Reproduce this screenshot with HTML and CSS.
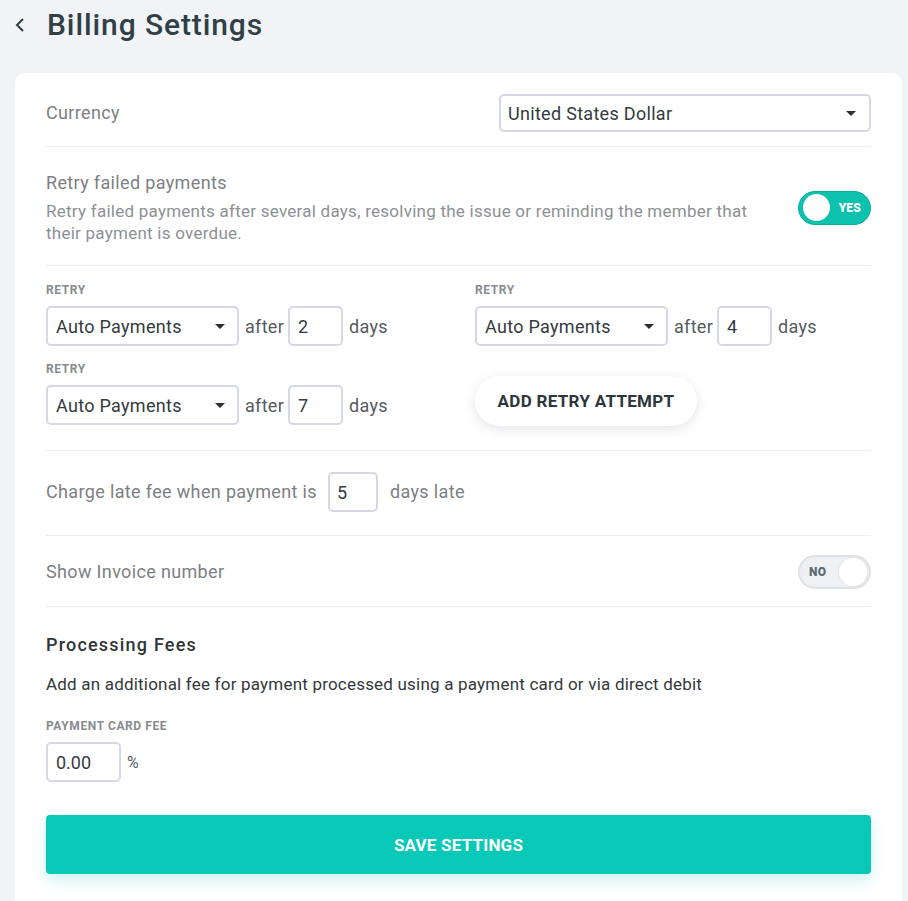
FILE: index.html
```html
<!DOCTYPE html>
<html>
<head>
<meta charset="utf-8">
<link rel="stylesheet" href="styles.css">
</head>
<body>
<header class="page-header">
  <svg class="back" width="12" height="16" viewBox="0 0 12 16"><path d="M9 2 L3 8 L9 14" fill="none" stroke="#2f4047" stroke-width="2"/></svg>
  <h1 class="title">Billing Settings</h1>
</header>
<main class="card">
  <section class="section row-between currency">
    <div class="label">Currency</div>
    <div class="select wide"><span>United States Dollar</span><i class="caret"></i></div>
  </section>

  <section class="section row-between retry-head">
    <div class="text-block">
      <div class="label">Retry failed payments</div>
      <div class="desc">Retry failed payments after several days, resolving the issue or reminding the member that their payment is overdue.</div>
    </div>
    <div class="toggle on"><span class="knob"></span><span class="toggle-text">YES</span></div>
  </section>

  <section class="section retries">
    <div class="retry">
      <div class="caps">RETRY</div>
      <div class="retry-line">
        <div class="select small"><span>Auto Payments</span><i class="caret"></i></div>
        <span class="word">after</span>
        <div class="input num">2</div>
        <span class="word">days</span>
      </div>
    </div>
    <div class="retry">
      <div class="caps">RETRY</div>
      <div class="retry-line">
        <div class="select small"><span>Auto Payments</span><i class="caret"></i></div>
        <span class="word">after</span>
        <div class="input num">4</div>
        <span class="word">days</span>
      </div>
    </div>
    <div class="retry">
      <div class="caps">RETRY</div>
      <div class="retry-line">
        <div class="select small"><span>Auto Payments</span><i class="caret"></i></div>
        <span class="word">after</span>
        <div class="input num">7</div>
        <span class="word">days</span>
      </div>
    </div>
    <div class="retry add-cell">
      <button class="add-btn">ADD RETRY ATTEMPT</button>
    </div>
  </section>

  <section class="section late">
    <span class="label">Charge late fee when payment is</span>
    <div class="input late-num">5</div>
    <span class="label">days late</span>
  </section>

  <section class="section row-between invoice">
    <div class="label">Show Invoice number</div>
    <div class="toggle off"><span class="toggle-text">NO</span><span class="knob"></span></div>
  </section>

  <section class="fees">
    <h2 class="fees-title">Processing Fees</h2>
    <p class="fees-desc">Add an additional fee for payment processed using a payment card or via direct debit</p>
    <div class="caps fee-label">PAYMENT CARD FEE</div>
    <div class="fee-line">
      <div class="input fee">0.00</div>
      <span class="pct">%</span>
    </div>
    <button class="save">SAVE SETTINGS</button>
  </section>
</main>
</body>
</html>
```

FILE: styles.css
```css
* { box-sizing: border-box; }
html, body { margin: 0; padding: 0; }
body {
  background: #f1f3f7;
  font-family: Roboto, "Liberation Sans", sans-serif;
  color: #333a40;
  height: 901px;
  overflow: hidden;
}
.page-header {
  display: flex;
  align-items: center;
  height: 48px;
  padding-left: 14px;
  margin-bottom: 25px;
}
.back { margin-right: 21px; margin-top: 1px; }
.title {
  margin: 0;
  font-size: 30px;
  font-weight: 500;
  color: #2f4047;
  letter-spacing: 0.9px;
}
.card {
  margin-left: 15px;
  width: 887px;
  background: #fff;
  border-radius: 10px;
  padding: 0 31px 40px;
}
.section { border-bottom: 1px solid #eceef2; }
.row-between { display: flex; justify-content: space-between; align-items: center; }
.label { font-size: 18px; color: #7c7f84; line-height: 24px; letter-spacing: 0.35px; }
.desc { font-size: 17px; color: #8d9095; line-height: 22px; margin-top: 5px; letter-spacing: 0.25px; }
.currency { padding: 21px 0 14px; }
.retry-head { padding: 24px 0 21px; }
.text-block { width: 712px; }

.select {
  height: 40px;
  border: 2px solid #d6d9e5;
  border-radius: 5px;
  display: flex;
  align-items: center;
  justify-content: space-between;
  padding: 0 12px 0 8px;
  font-size: 18px;
  letter-spacing: 0.3px;
  color: #333a40;
  background: #fff;
}
.select.wide { width: 372px; height: 38px; padding-left: 7px; padding-right: 13px; }
.select.small { width: 193px; }
.caret {
  width: 0; height: 0;
  border-left: 5px solid transparent;
  border-right: 5px solid transparent;
  border-top: 5px solid #2b2f33;
}

.toggle {
  width: 73px;
  height: 34px;
  border-radius: 17px;
  display: flex;
  align-items: center;
  padding: 0 4px;
}
.toggle.on { background: #0cc1ad; border: 1px solid #0aae9c; justify-content: space-between; padding-left: 4px; padding-right: 9px; }
.toggle.off { background: #eef0f3; border: 2px solid #e0e2e6; justify-content: space-between; padding-left: 9px; padding-right: 2px; }
.knob { width: 27px; height: 27px; border-radius: 50%; background: #fff; }
.toggle.off .knob { width: 28px; height: 28px; box-shadow: 0 0 0 1px #e2e4e8; }
.toggle-text { font-size: 12px; font-weight: 900; color: #fff; letter-spacing: 0.2px; }
.toggle.off .toggle-text { color: #5d6a74; }

.retries {
  display: grid;
  grid-template-columns: 429px 1fr;
  row-gap: 16px;
  padding: 17px 0 24px;
}
.caps { font-size: 12px; font-weight: 700; color: #888b8f; line-height: 14px; letter-spacing: 0.6px; }
.retry .caps { margin-bottom: 9px; }
.retry-line { display: flex; align-items: center; }
.word { font-size: 18px; color: #555b61; margin: 0 4px 0 6px; letter-spacing: 0.3px; }
.input {
  height: 40px;
  border: 2px solid #d6d9e5;
  border-radius: 5px;
  display: flex;
  align-items: center;
  padding-left: 8px;
  font-size: 18px;
  color: #333a40;
  background: #fff;
}
.input.num { width: 55px; }
.add-cell { display: flex; align-items: flex-start; }
.add-btn {
  margin-top: 14px;
  height: 50px;
  width: 222px;
  border: none;
  border-radius: 25px;
  background: #fff;
  box-shadow: 0 3px 12px rgba(40, 50, 70, 0.13);
  font-family: Roboto, "Liberation Sans", sans-serif;
  font-size: 17px;
  font-weight: 700;
  letter-spacing: 0.3px;
  color: #2c363c;
}

.late { display: flex; align-items: center; padding: 21px 0 23px; }
.late-num { width: 50px; margin: 0 12px 0 11px; padding-left: 7px; }
.invoice { padding: 19px 0 17px; }

.fees { padding-top: 27px; }
.fees-title {
  margin: 0;
  font-size: 18px;
  font-weight: 500;
  color: #2f3438;
  line-height: 22px;
  letter-spacing: 1.2px;
}
.fees-desc { margin: 17px 0 0; font-size: 17px; color: #33383c; line-height: 22px; letter-spacing: 0.2px; }
.fee-label { margin-top: 24px; }
.fee-line { display: flex; align-items: center; margin-top: 9px; }
.input.fee { width: 75px; }
.pct { font-size: 16px; color: #555b61; margin-left: 6px; }
.save {
  display: block;
  width: 100%;
  margin-top: 33px;
  height: 59px;
  border: none;
  border-radius: 4px;
  background: #08c9b7;
  box-shadow: 0 6px 14px rgba(8, 201, 183, 0.22);
  color: #fff;
  font-family: Roboto, "Liberation Sans", sans-serif;
  font-size: 17px;
  font-weight: 700;
  letter-spacing: 0.2px;
}
```
